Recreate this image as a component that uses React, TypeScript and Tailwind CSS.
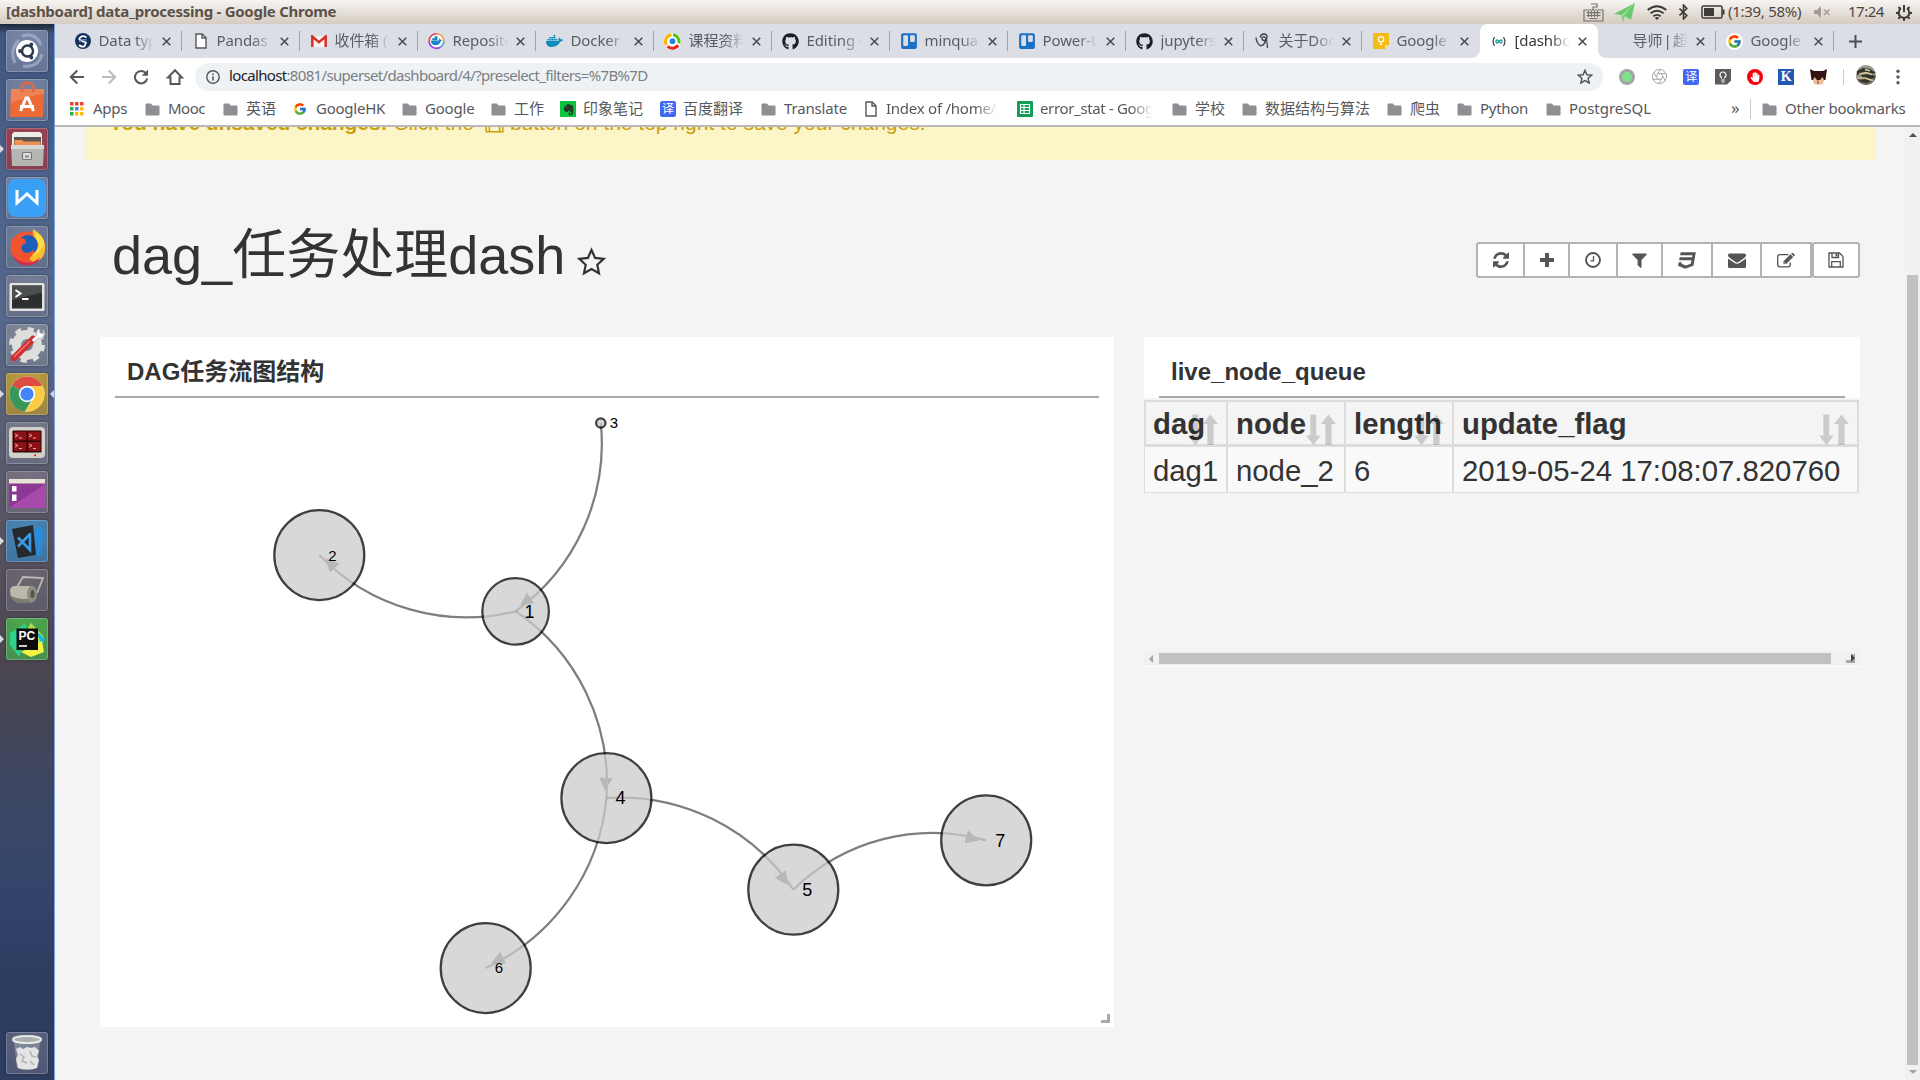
import React from 'react';
import { FcGoogle } from 'react-icons/fc';
import { FaGithub, FaTrello, FaDocker, FaEvernote, FaCss3, FaHandPaper } from 'react-icons/fa';
import { Aperture, Lightbulb } from 'lucide-react';

/* ---------- small shared drawings ---------- */

const PageIcon = () => (
  <svg width="12" height="16" viewBox="0 0 12 16" fill="#fff" stroke="#55585c" strokeWidth="1.4">
    <path d="M1 1h6.2L11 4.8V15H1z" />
    <path d="M7 1v4h4" fill="none" />
  </svg>
);

const Folder = () => (
  <svg width="15" height="13" viewBox="0 0 15 13" fill="#8e8e93">
    <path d="M1.5 0.5h4.3l1.8 2h5.9q1 0 1 1v8q0 1-1 1h-12q-1 0-1-1v-10q0-1 1-1z" />
  </svg>
);

const Cross = () => (
  <svg width="9" height="9" viewBox="0 0 9 9" stroke="#4b4e52" strokeWidth="1.6">
    <path d="M0.7 0.7l7.6 7.6M8.3 0.7L0.7 8.3" />
  </svg>
);

const TrelloMark = () => (
  <span className="flex h-4 w-4 items-center justify-center text-[#1b6fc4]">
    <FaTrello size={18} />
  </span>
);

const Keep = () => (
  <svg width="16" height="16" viewBox="0 0 16 16">
    <path d="M0 1q0-1 1-1h14q1 0 1 1v11l-4 4H1q-1 0-1-1z" fill="#f5ba15" />
    <path d="M16 12l-4 4v-4z" fill="#fbe08d" />
    <circle cx="8" cy="6.3" r="2.7" fill="none" stroke="#fff" strokeWidth="1.2" />
    <path d="M6.7 10h2.6M7 11.6h2" stroke="#fff" strokeWidth="1.1" />
  </svg>
);

const Gmail = () => (
  <svg width="16" height="12" viewBox="0 0 16 12">
    <path d="M0 1h16v11H0z" fill="#f3f3f3" />
    <path d="M1.3 12V1.5L8 7.2l6.7-5.7V12" fill="none" stroke="#d93025" strokeWidth="2.5" />
  </svg>
);

const Repo = () => (
  <svg width="18" height="18" viewBox="0 0 18 18">
    <circle cx="9" cy="9" r="7.8" fill="#fff" stroke="#f2994a" strokeWidth="1.6" />
    <path d="M9 1.2a7.8 7.8 0 0 0-7.8 7.8" fill="none" stroke="#e0457b" strokeWidth="1.6" />
    <path d="M1.2 9a7.8 7.8 0 0 0 12 6.500" fill="none" stroke="#8a3ffc" strokeWidth="1.6" />
    <path d="M13.200 15.500A7.800 7.800 0 0 0 16.800 9" fill="none" stroke="#2bb4e8" strokeWidth="1.6" />
    <path d="M3 8.500h8.500l.4-2.500 1.200 1.500 2.200.5-1.900 1.500Q12 13.500 8 13.500q-4.500 0-5-5z" fill="#1488c6" />
    <path d="M4.500 6h5.500v2.200H4.500zM7 4h3v2H7z" fill="#1488c6" />
  </svg>
);

const Course = () => (
  <svg width="17" height="17" viewBox="0 0 17 17" fill="none" strokeWidth="3">
    <circle cx="8.500" cy="8.500" r="7" fill="#fff" stroke="#fff" />
    <path d="M7.500 1.800A6.800 6.800 0 0 0 2.500 12" stroke="#f7b500" />
    <path d="M9 1.800a6.800 6.800 0 0 1 5.800 8.500" stroke="#4fc414" />
    <path d="M3.500 13.200a6.800 6.800 0 0 0 10.500-1" stroke="#e8251c" />
    <circle cx="8.500" cy="8.200" r="2.900" fill="#2185d8" />
  </svg>
);

const Scipy = () => (
  <svg width="16" height="16" viewBox="0 0 16 16">
    <circle cx="8" cy="8" r="8" fill="#16335f" />
    <path d="M11.500 4.500Q8.500 2 5.500 4.200T7 8t4 2-1.500 3.200Q7 14.500 4 12" fill="none" stroke="#fff" strokeWidth="1.7" />
    <path d="M4 8.500q3-3 8-1.500" fill="none" stroke="#7fa3d8" strokeWidth="1" />
  </svg>
);

const Infinity2 = () => (
  <svg width="14" height="9" viewBox="0 0 14 9" fill="none" stroke="#484848" strokeWidth="1.300">
    <path d="M3 .7Q1.500.7 1.500 2.500T.5 4.500q1 0 1 2T3 8.300M11 .7q1.500 0 1.500 1.800t1 2q-1 0-1 2T11 8.300" />
    <path d="M7 4.500Q5.800 3 4.900 3T4 4.500 4.900 6 7 4.500 9.100 3 10 4.500 9.100 6 7 4.500z" stroke="#1f9d9f" />
  </svg>
);

const Scribble = () => (
  <svg width="15" height="16" viewBox="0 0 15 16" fill="none" stroke="#3f3f3f" strokeWidth="1.300">
    <path d="M1 4.500q0 3 2 6t4 2q3-1.500 4-6" />
    <path d="M5 4.500Q6 1 9 1t3 3-2.500 3.500Q7 7.500 7 5.500T9.500 4Q12 5 12.500 15" />
  </svg>
);

const Sheet = () => (
  <svg width="16" height="16" viewBox="0 0 16 16">
    <rect width="16" height="16" rx="1" fill="#0f9d58" />
    <path d="M3.500 3.500h9v9h-9zM3.500 6.500h9M3.500 9.500h9M7 3.500v9" fill="none" stroke="#fff" strokeWidth="1.200" />
  </svg>
);

const AppsGrid = () => (
  <svg width="14" height="14" viewBox="0 0 14 14">
    {['#ea4335', '#ea4335', '#ea4335', '#34a853', '#4285f4', '#fbbc05', '#34a853', '#fbbc05', '#fbbc05'].map((c, i) => (
      <rect key={i} x={(i % 3) * 5} y={Math.floor(i / 3) * 5} width="3.500" height="3.500" fill={c} />
    ))}
  </svg>
);

const Yi = () => (
  <span className="flex h-4 w-4 items-center justify-center rounded-[2px] bg-[#4169f0] text-[12px] leading-none text-white">译</span>
);

/* ---------- desktop top bar ---------- */

function TopBar() {
  return (
    <header className="flex h-6 shrink-0 items-center bg-gradient-to-b from-[#f7f5f2] to-[#d5cbc1] pl-[6px] text-[15px] text-[#4d4841]">
      <span className="mb-[2px] font-bold tracking-[-0.27px] text-[#5b524a]">[dashboard] data_processing - Google Chrome</span>
      <div className="ml-auto flex h-full items-center">
        <svg className="mr-[10px]" width="21" height="19" viewBox="0 0 21 19" fill="none" stroke="#77736e" strokeWidth="1.200">
          <path d="M1 7h19v11H1zM10 7V4h4V1H8M3.500 9.700h14M3.500 12.500h14M6.500 15.500h8M5.500 8v6M8.500 8v6M11.500 8v6M14.500 8v6" />
        </svg>
        <svg className="mr-[11px]" width="22" height="19" viewBox="0 0 22 19">
          <path d="M0 11L21 0l-4 17-6-4-2 6-2-7z" fill="#6cc86d" />
          <path d="M7 12L21 0 9.500 13.500 9 19z" fill="#8edc90" />
        </svg>
        <svg className="mr-[12px]" width="20" height="15" viewBox="0 0 20 15" fill="none" stroke="#3c3b37" strokeWidth="1.900">
          <path d="M0.700 5Q10-2.500 19.300 5M3.500 8.200q6.500-5 13 0M6.300 11.200q3.700-2.700 7.400 0" />
          <path d="M7.800 12.700q2.200-1.300 4.400 0L10 15z" fill="#3c3b37" stroke="none" />
        </svg>
        <svg className="mr-[13px]" width="9" height="16" viewBox="0 0 9 16" fill="none" stroke="#3c3b37" strokeWidth="1.600">
          <path d="M0.500 4.500l7.300 7L4.500 15V1l3.300 3.500-7.300 7" />
        </svg>
        <svg className="mr-[3px]" width="24" height="14" viewBox="0 0 24 14">
          <rect x="1" y="1" width="20" height="12" rx="1.500" fill="none" stroke="#3c3b37" strokeWidth="1.500" />
          <path d="M3 3h10v8H3zM21.500 4.500H23.500v5h-2z" fill="#3c3b37" />
        </svg>
        <span className="mb-[2px] w-[86px] whitespace-nowrap tracking-[-0.28px]">(1:39, 58%)</span>
        <svg className="mr-[17px]" width="17" height="12" viewBox="0 0 17 12">
          <path d="M0 4h3l4-4v12L3 8H0z" fill="#a29c95" />
          <path d="M10 3.500l5.500 5.500M15.500 3.500L10 9" stroke="#a29c95" strokeWidth="1.500" />
        </svg>
        <span className="mb-[2px] w-[48px] tracking-[-0.5px]">17:24</span>
        <svg className="mr-2" width="16" height="17" viewBox="0 0 16 17" fill="none" stroke="#3c3b37">
          <path d="M5 4.300a5.300 5.300 0 1 0 6 0" strokeWidth="2" />
          <path d="M8 1v7" strokeWidth="2" />
          <path d="M2.500 3l1.700 1.700M13.500 3l-1.700 1.700M0 9h2.700M13.300 9H16M2.300 14.700L4 13M13.700 14.700L12 13M8 14v3" strokeWidth="2" />
        </svg>
      </div>
    </header>
  );
}

/* ---------- launcher ---------- */

const launcher: { tile: string; running?: boolean; focused?: boolean; art: React.ReactNode }[] = [
  {
    tile: 'bg-[#7684a5]',
    art: (
      <>
        <path d="M9 33Q3 20 13 10M16 6Q30 2 35 15M36 24Q33 38 17 36" fill="none" stroke="#b4bdd0" strokeWidth="3" opacity=".6" />
        <circle cx="21" cy="21" r="11" fill="#fff" />
        <circle cx="21.500" cy="21" r="5.500" fill="none" stroke="#2e3a52" strokeWidth="2.500" />
        <circle cx="14" cy="21" r="1.900" fill="#2e3a52" />
        <circle cx="25.300" cy="14.500" r="1.900" fill="#2e3a52" />
        <circle cx="25.300" cy="27.500" r="1.900" fill="#2e3a52" />
      </>
    ),
  },
  {
    tile: 'bg-[#7181a1]',
    art: (
      <>
        <path d="M5 10h33l-1 28H4z" fill="#ec6a35" />
        <path d="M5 10h33v5Q20 17 4.800 24z" fill="#f0966a" opacity=".6" />
        <path d="M16 13V7q0-3 5-3t6 3v6" fill="none" stroke="#d96a4e" strokeWidth="2.800" />
        <path d="M14.500 32l5.500-13h2l5.500 13M14 27.500h14" fill="none" stroke="#fff" strokeWidth="3" />
      </>
    ),
  },
  {
    tile: 'bg-[#9c4353]',
    running: true,
    art: (
      <>
        <path d="M6 6l2-2h26l2 2v12H6z" fill="#ececea" />
        <path d="M8 9h27v8H8z" fill="#5a5550" />
        <path d="M8.500 12h8l1 1.500h17V18h-26z" fill="#ec9150" />
        <path d="M5 17h33l-1 21H6z" fill="#b5b5b3" />
        <path d="M5 17h33v4H5z" fill="#d7d7d5" />
        <rect x="16.500" y="24.500" width="9" height="7" rx="1" fill="#ddd" stroke="#777" strokeWidth="1.200" />
        <path d="M19 27.500h4v2h-4z" fill="#888" />
      </>
    ),
  },
  {
    tile: 'bg-[#7383a2]',
    art: (
      <>
        <rect x="2" y="2" width="38" height="38" rx="8" fill="#3aa0f6" />
        <path d="M11 13v13l10-9 10 9V13" fill="none" stroke="#fff" strokeWidth="3" />
      </>
    ),
  },
  {
    tile: 'bg-[#6f7d9a]',
    art: (
      <>
        <circle cx="21" cy="22" r="16.500" fill="#ef5532" />
        <path d="M27 3q-1 7 3 10-2 12-9 16 3 6 8 8 13-6 9.500-21Q36 8 27 3z" fill="#fbbd2c" />
        <circle cx="22" cy="19" r="10" fill="#1d5fb8" />
        <path d="M14 12q5 0 6 3 0 3-4 4-2 6 4 8 6 0 8-5 0 11-10 12Q5 32 6 12q3 3 8 0z" fill="#f3522f" />
        <path d="M29 6q-1 6 4 11-1 8-7 13 11-4 12-14Q36 9 29 6z" fill="#fedc45" />
        <path d="M6 27q4 9 16 10 8-1 12-6-2 8-13 8.500Q9 39 6 27z" fill="#d32a4d" />
      </>
    ),
  },
  {
    tile: 'bg-[#747d93]',
    art: (
      <>
        <rect x="3.500" y="8" width="35" height="28" rx="1.500" fill="#e2e2df" />
        <rect x="6" y="10.500" width="30" height="23" fill="#2c2e2f" />
        <path d="M6 10.500h30v7L6 25z" fill="#4b4f50" />
        <path d="M9.500 15l5 3.500-5 3.500M16 24h6.500" fill="none" stroke="#fff" strokeWidth="2" />
      </>
    ),
  },
  {
    tile: 'bg-[#7e8798]',
    art: (
      <>
        <circle cx="21" cy="21" r="10.500" fill="none" stroke="#dededc" strokeWidth="9" />
        <circle cx="21" cy="21" r="16" fill="none" stroke="#dededc" strokeWidth="4" strokeDasharray="6.200 6.370" />
        <path d="M8 34L27 15" stroke="#cf2f2f" strokeWidth="6.500" strokeLinecap="round" />
        <path d="M8 33L24 17" stroke="#ef7b74" strokeWidth="1.500" />
        <path d="M26 16l5-5q-1-4 2-6l1 4 4 1-1-4q3 4 0 7-3 2-5 1l-4 4z" fill="#fff" stroke="#c9c9c9" />
      </>
    ),
  },
  {
    tile: 'bg-[#b9993f]',
    running: true,
    focused: true,
    art: (
      <>
        <circle cx="21" cy="21" r="17.500" fill="#fff" />
        <path d="M21 21L5.800 12.300A17.500 17.500 0 0 1 36.200 12.300z" fill="#dc4c40" />
        <path d="M21 21l-15.200-8.700A17.500 17.500 0 0 0 19 38.400l7-12z" fill="#38985a" />
        <path d="M21 13h15.500A17.500 17.500 0 0 1 19 38.400L28 25z" fill="#fccb46" />
        <circle cx="21" cy="21" r="8.200" fill="#fff" />
        <circle cx="21" cy="21" r="6.600" fill="#4285f4" />
      </>
    ),
  },
  {
    tile: 'bg-[#77798a]',
    art: (
      <>
        <rect x="3" y="5" width="36" height="31" rx="4" fill="#d1d1ca" />
        <rect x="6.500" y="8.500" width="29" height="22" rx="1" fill="#2d0405" />
        <path d="M8 9.500h12.500v9H8zM22 9.500h12.500v9H22zM8 20h12.500v9H8zM22 20h12.500v9H22z" fill="#8b1116" />
        <path d="M9 12l3 1.500L9 15M23 12l3 1.500-3 1.500M9 22l3 1.500L9 25M23 22l3 1.500-3 1.500M13 16h3M27 16h3M13 26.500h3M27 26.500h3" fill="none" stroke="#eaa" strokeWidth="1" />
        <circle cx="29" cy="33.300" r="1.100" fill="#e22" />
      </>
    ),
  },
  {
    tile: 'bg-[#777080]',
    art: (
      <>
        <rect x="3" y="8" width="36" height="29" rx="1" fill="#8d3795" />
        <path d="M3 37l36-24v24z" fill="#b353b7" opacity=".7" />
        <rect x="3" y="8" width="36" height="4.500" fill="#e7e3d6" />
        <path d="M6 15h4.500v5.500H6zM6 23.500h4.500V30H6z" fill="#fff" />
      </>
    ),
  },
  {
    tile: 'bg-[#4883b2]',
    running: true,
    art: (
      <>
        <path d="M29 6l9 4-3 25-22 3 14-6z" fill="#2b8bd8" />
        <path d="M6 9l21-4 3 30-18 3z" fill="#26282b" />
        <path d="M24 13v17l-12-12.500M24 14L12 26.500M24 13v17" fill="none" stroke="#3a9be4" strokeWidth="2.600" />
      </>
    ),
  },
  {
    tile: 'bg-[#69646e]',
    art: (
      <>
        <path d="M11 18l6-10 20 1-6 15" fill="none" stroke="#b9b9b3" strokeWidth="1.800" />
        <path d="M4 22q0-5 5-5h17v17H14Q4 32 4 22z" fill="#b9b8aa" />
        <path d="M5 27q10 5 21 2v5H14Q7 33 5 27z" fill="#7c7b70" />
        <ellipse cx="26" cy="25" rx="5" ry="8.500" fill="#8e8d83" />
        <ellipse cx="26.500" cy="25" rx="2" ry="4" fill="#55544e" />
      </>
    ),
  },
  {
    tile: 'bg-[#4da54d]',
    running: true,
    art: (
      <>
        <path d="M4 15l15-9 4 9-10 24-9-12z" fill="#2fd08c" />
        <path d="M25 5l13 14-5 10-14-14z" fill="#a8e54b" />
        <path d="M30 13l9 8-3 6z" fill="#17b6e8" />
        <path d="M15 34l21-11 2 11-13 5z" fill="#f6f142" />
        <rect x="10.500" y="10.500" width="21.500" height="21.500" fill="#0c0c0c" />
        <path d="M13 28h8" stroke="#fff" strokeWidth="1.600" />
        <text x="12.500" y="22" fontFamily="Liberation Sans" fontWeight="bold" fontSize="12" fill="#fff">PC</text>
      </>
    ),
  },
];

function Tile({ tile, running, focused, art }: { tile: string; running?: boolean; focused?: boolean; art: React.ReactNode }) {
  return (
    <div className="flex h-[42px] w-[55px] shrink-0 items-center">
      <span className="flex w-[6px] items-center">
        {running && <span className="h-0 w-0 border-y-[4px] border-l-[4px] border-y-transparent border-l-[#d9dadf]" />}
      </span>
      <span className={`h-[42px] w-[42px] rounded-[3px] shadow-[inset_0_0_0_1px_rgba(255,255,255,0.22),inset_0_-14px_16px_rgba(40,50,90,0.18),0_0_3px_rgba(0,0,0,0.35)] ${tile}`}>
        <svg width="42" height="42" viewBox="0 0 42 42">{art}</svg>
      </span>
      <span className="flex w-[7px] justify-end pr-px">
        {focused && <span className="h-0 w-0 border-y-[4px] border-r-[4px] border-y-transparent border-r-[#d9dadf]" />}
      </span>
    </div>
  );
}

function Launcher() {
  return (
    <aside className="flex w-[55px] shrink-0 flex-col gap-[7px] border-r border-[#7ea3dc] bg-[linear-gradient(180deg,#1d2838_0px,#42577f_10px,#4c638c_160px,#56678a_300px,#5a5f74_400px,#57525f_520px,#4a4550_640px,#454555_690px,#3d4762_760px,#34456b_860px,#2c3d62_960px,#2e3c60_1056px)] pb-[6px] pt-[6px]">
      {launcher.map((t, i) => (
        <Tile key={i} {...t} />
      ))}
      <div className="mt-auto">
        <Tile
          tile="bg-[#58617d]"
          art={
            <>
              <path d="M8 10l3 26q10 4 20 0l3-26z" fill="#7e8798" />
              <path d="M10 17l4-2 3 2 4-2 4 1 4-1 4 4-2 5 2 4-2 8q-10 3-19 0l-2-9 2-4z" fill="#e3e4e3" />
              <path d="M14 22l4 3-2 4 5 2M24 19l2 5 4 1M24 29l4 4" stroke="#b0b3b3" fill="none" strokeWidth="1.500" />
              <ellipse cx="21" cy="7.500" rx="14" ry="3.500" fill="#a9aeae" stroke="#e6e8e4" strokeWidth="2" />
            </>
          }
        />
      </div>
    </aside>
  );
}

/* ---------- browser chrome ---------- */

const tabs: { icon: React.ReactNode; title: string; active?: boolean }[] = [
  { icon: <Scipy />, title: 'Data types' },
  { icon: <PageIcon />, title: 'Pandas -' },
  { icon: <Gmail />, title: '收件箱 (8' },
  { icon: <Repo />, title: 'Repositories' },
  { icon: <FaDocker size={18} color="#0d8dbb" />, title: 'Docker Hub' },
  { icon: <Course />, title: '课程资料' },
  { icon: <FaGithub size={17} color="#1b1f23" />, title: 'Editing d' },
  { icon: <TrelloMark />, title: 'minquan' },
  { icon: <TrelloMark />, title: 'Power-Up' },
  { icon: <FaGithub size={17} color="#1b1f23" />, title: 'jupyterst' },
  { icon: <Scribble />, title: '关于Dock' },
  { icon: <Keep />, title: 'Google K' },
  { icon: <Infinity2 />, title: '[dashboard]', active: true },
  { icon: null, title: '导师 | 超星' },
  { icon: <span className="rounded-full bg-white p-px"><FcGoogle size={15} /></span>, title: 'Google' },
];

function TabStrip() {
  return (
    <div className="flex h-[34px] items-stretch bg-[#dcdee6] pl-[9px]">
      {tabs.map((t, i) => (
        <div key={i} className={`relative flex w-[118px] shrink-0 items-center ${t.active ? 'rounded-t-[8px] bg-white' : ''}`}>
          {t.active && (
            <>
              <span className="absolute bottom-0 left-[-8px] h-2 w-2 bg-[radial-gradient(circle_at_0_0,transparent_7.5px,#fff_8px)]" />
              <span className="absolute bottom-0 right-[-8px] h-2 w-2 bg-[radial-gradient(circle_at_100%_0,transparent_7.5px,#fff_8px)]" />
            </>
          )}
          <span className="ml-[10px] flex w-[17px] items-center justify-center">{t.icon}</span>
          <span
            className={`mb-[2px] ml-[7.500px] w-[55px] overflow-hidden whitespace-nowrap text-[15px] [mask-image:linear-gradient(90deg,#000_65%,transparent)] ${
              i === 13 ? 'tracking-[-0.1px] [word-spacing:-2.5px]' : 'tracking-[-0.1px]'
            } ${t.active ? 'text-[#35383c]' : 'text-[#5a5d62]'}`}
          >
            {t.title}
          </span>
          <span className="ml-[8px]">
            <Cross />
          </span>
          {!t.active && i !== 11 && <span className="ml-auto h-5 w-px bg-[#9fa2a9]" />}
        </div>
      ))}
      <svg className="ml-[15px] self-center" width="13" height="13" viewBox="0 0 13 13" stroke="#4b4e52" strokeWidth="2">
        <path d="M6.500 0v13M0 6.500h13" />
      </svg>
    </div>
  );
}

function AddressBar() {
  return (
    <div className="flex h-[37px] items-center bg-white pl-[14px]">
      <svg width="118" height="20" viewBox="0 0 118 20" fill="none" stroke="#55585d" strokeWidth="2">
        <path d="M15 10H2M8.300 3.500L1.800 10l6.500 6.500" />
        <path d="M33 10h13M39.700 3.500l6.500 6.500-6.500 6.500" stroke="#b9bbbe" />
        <path d="M77 6.300A6.200 6.200 0 1 0 78.200 11.500" />
        <path d="M79 2.500V8.800H72.700z" fill="#55585d" stroke="none" />
        <path d="M99 10.500h2.500V17h9v-6.500h2.500L106 3.300z" />
      </svg>
      <div className="ml-[8px] flex h-7 w-[1408px] items-center rounded-full bg-[#eef2f4] pl-[11px] pr-[10px]">
        <svg width="14" height="14" viewBox="0 0 14 14" fill="none" stroke="#55585d" strokeWidth="1.400">
          <circle cx="7" cy="7" r="6.200" />
          <path d="M7 6.200v4.300M7 3.500v1.500" strokeWidth="1.600" />
        </svg>
        <span className="mb-[2px] ml-[9px] whitespace-nowrap text-[15px] tracking-[-0.66px] text-[#7a7f85]">
          <span className="text-[#202124]">localhost</span>:8081/superset/dashboard/4/?preselect_filters=%7B%7D
        </span>
        <svg className="ml-auto" width="16" height="15" viewBox="0 0 16 15" fill="none" stroke="#55585d" strokeWidth="1.500">
          <path d="M8 1.300l1.900 4.400 4.800.4-3.600 3.200 1.100 4.700L8 11.500 3.800 14l1.100-4.700L1.300 6.100l4.800-.4z" />
        </svg>
      </div>
      <div className="ml-[16px] flex w-[208px] items-center justify-between">
        <svg width="16" height="16" viewBox="0 0 16 16">
          <circle cx="8" cy="8" r="8" fill="#a4a4a4" />
          <circle cx="8" cy="8" r="5" fill="#7ee08b" />
        </svg>
        <Aperture size={17} color="#a5a5a5" strokeWidth={1.400} />
        <Yi />
        <span className="flex h-4 w-4 items-center justify-center bg-[#5c5c5c] [clip-path:polygon(0_0,100%_0,100%_75%,75%_100%,0_100%)]">
          <Lightbulb size={12} color="#fff" strokeWidth={2.400} />
        </span>
        <span className="flex h-4 w-4 items-center justify-center rounded-full bg-[#f4000e]">
          <FaHandPaper size={10} color="#fff" />
        </span>
        <span className="flex h-4 w-4 items-center justify-center bg-[#2459b3] font-['Liberation_Serif'] text-[14px] font-bold leading-none text-white">K</span>
        <svg width="17" height="16" viewBox="0 0 17 16">
          <path d="M0 0l4 2h9l4-2-1.500 11H1.500z" fill="#33140f" />
          <path d="M3 11l1.500-3L7 11q1.500 1 3 0l2.500-3 1.500 3-1 4q-4 1.500-9 0z" fill="#ecbc9a" />
          <path d="M8 11v4" stroke="#7a4a38" />
        </svg>
      </div>
      <span className="ml-4 h-4 w-px bg-[#c9cbce]" />
      <svg className="ml-[12px] mb-[4px]" width="20" height="20" viewBox="0 0 20 20">
        <defs>
          <clipPath id="avatar">
            <circle cx="10" cy="10" r="10" />
          </clipPath>
        </defs>
        <g clipPath="url(#avatar)">
          <path d="M0 0h20v20H0z" fill="#96998b" />
          <path d="M0 12h20v8H0z" fill="#6d675a" />
          <path d="M1 6l6-3 7 1 6 4-5 1-4-2-4 2-6 1zM5 10l7-1 8 2-4 3-9-1zM2 16l7-2 5 2-3 2z" fill="#33322e" />
          <path d="M3 9l7-1.500 6 2M1 13l8 0 8 2.500M9 4.500l5 1.200" stroke="#d9c995" strokeWidth="1.500" fill="none" />
        </g>
      </svg>
      <svg className="ml-[20px]" width="4" height="16" viewBox="0 0 4 16" fill="#55585d">
        <circle cx="2" cy="2.200" r="1.700" />
        <circle cx="2" cy="8" r="1.700" />
        <circle cx="2" cy="13.800" r="1.700" />
      </svg>
    </div>
  );
}

const bookmarks: { w: string; icon: React.ReactNode; label: string; text?: string }[] = [
  { w: 'w-[75px]', icon: <AppsGrid />, label: 'Apps', text: 'tracking-[-0.3px]' },
  { w: 'w-[78px]', icon: <Folder />, label: 'Mooc', text: 'tracking-[-0.5px]' },
  { w: 'w-[70px]', icon: <Folder />, label: '英语' },
  { w: 'w-[109px]', icon: <FcGoogle size={14} />, label: 'GoogleHK', text: 'tracking-[-0.25px]' },
  { w: 'w-[89px]', icon: <Folder />, label: 'Google', text: 'tracking-[-0.2px]' },
  {
    w: 'w-[69px]',
    icon: <Folder />,
    label: '工作',
  },
  {
    w: 'w-[100px]',
    icon: (
      <span className="flex h-4 w-4 items-center justify-center bg-[#0cc33d]">
        <FaEvernote size={13} color="#26382b" />
      </span>
    ),
    label: '印象笔记',
  },
  { w: 'w-[101px]', icon: <Yi />, label: '百度翻译' },
  { w: 'w-[104px]', icon: <Folder />, label: 'Translate', text: 'tracking-[-0.15px]' },
  { w: 'w-[152px]', icon: <PageIcon />, label: 'Index of /home/xm', text: 'ml-[-2px] w-[112px] overflow-hidden tracking-[-0.25px] [mask-image:linear-gradient(90deg,#000_80%,transparent)]' },
  { w: 'w-[155px]', icon: <Sheet />, label: 'error_stat - Google', text: 'w-[113px] overflow-hidden tracking-[-0.35px] [mask-image:linear-gradient(90deg,#000_80%,transparent)]' },
  { w: 'w-[70px]', icon: <Folder />, label: '学校' },
  { w: 'w-[145px]', icon: <Folder />, label: '数据结构与算法' },
  { w: 'w-[70px]', icon: <Folder />, label: '爬虫' },
  { w: 'w-[89px]', icon: <Folder />, label: 'Python', text: 'tracking-[-0.3px]' },
  { w: 'w-[185px]', icon: <Folder />, label: 'PostgreSQL', text: '' },
];

function BookmarksBar() {
  return (
    <div className="flex h-[32px] items-center border-b-2 border-[#b9b9bd] bg-white pb-[2px] pl-[15px] text-[15px] text-[#55585d]">
      {bookmarks.map((b) => (
        <span key={b.label} className={`flex shrink-0 items-center whitespace-nowrap ${b.w}`}>
          <span className="flex w-[23px] shrink-0 items-center">{b.icon}</span>
          <span className={`mb-[2px] ${b.text ?? ''}`}>{b.label}</span>
        </span>
      ))}
      <span className="mb-[3px] w-[19px] text-[17px] leading-none">»</span>
      <span className="mr-[11px] h-5 w-px bg-[#c9cbce]" />
      <span className="flex items-center whitespace-nowrap">
        <span className="w-[23px]">
          <Folder />
        </span>
        <span className="mb-[2px] tracking-[-0.25px]">Other bookmarks</span>
      </span>
    </div>
  );
}

/* ---------- dashboard ---------- */

const nodes = [
  { id: '1', x: 515.6, y: 611.3, r: 33.3, size: 18, base: 617.700 },
  { id: '2', x: 319.3, y: 555, r: 45, size: 15, base: 561 },
  { id: '3', x: 600.8, y: 423, r: 4.7, size: 15, base: 428.3 },
  { id: '4', x: 606.4, y: 798, r: 45, size: 18, base: 804 },
  { id: '5', x: 793.3, y: 889.7, r: 45, size: 18, base: 896 },
  { id: '6', x: 485.700, y: 968, r: 45, size: 15, base: 973.300 },
  { id: '7', x: 986.200, y: 840.300, r: 45, size: 18, base: 846.700 },
];

const links = [
  ['3', '1'],
  ['1', '2'],
  ['1', '4'],
  ['4', '5'],
  ['4', '6'],
  ['5', '7'],
];

function Dag() {
  const find = (id: string) => nodes.find((n) => n.id === id)!;
  return (
    <svg className="block" width="1014" height="628" viewBox="100 398 1014 628" fontFamily="Liberation Sans">
      <defs>
        <marker id="end" viewBox="0 -5 10 10" refX="15" refY="-1.500" markerWidth="6" markerHeight="6" orient="auto">
          <path d="M0,-5L10,0L0,5" />
        </marker>
      </defs>
      {links.map(([a, b]) => {
        const s = find(a);
        const t = find(b);
        const d = Math.hypot(t.x - s.x, t.y - s.y);
        return (
          <path
            key={a + b}
            d={`M${s.x},${s.y}A${d},${d} 0 0,1 ${t.x},${t.y}`}
            fill="none"
            stroke="#000"
            strokeWidth="2.250"
            opacity="0.500"
            markerEnd="url(#end)"
          />
        );
      })}
      {nodes.map((n) => (
        <g key={n.id}>
          <circle cx={n.x} cy={n.y} r={n.r} fill="#ccc" stroke="#000" strokeWidth="2.250" opacity="0.750" />
          <text x={n.x + 9} y={n.base} fontSize={n.size}>
            {n.id}
          </text>
        </g>
      ))}
    </svg>
  );
}

const Grip = () => (
  <svg width="9" height="9" viewBox="0 0 9 9">
    <path d="M7.500 0v7.500H0" fill="none" stroke="#aaa" strokeWidth="3" />
  </svg>
);

const SaveGlyph = ({ size, color }: { size: number; color: string }) => (
  <svg width={size} height={size} viewBox="0 0 16 16" fill="none" stroke={color} strokeWidth="1.300">
    <path d="M1 1h10.500L15 4.500V15H1z" />
    <path d="M4 1v4.500h6.500V1M3.700 15V9.700h8.600V15" />
    <path d="M7.500 1.500h2v3h-2z" fill={color} stroke="none" />
  </svg>
);

const actions: { w: string; glyph: React.ReactNode }[] = [
  {
    w: 'w-[49px]',
    glyph: (
      <svg width="16" height="16" viewBox="0 0 1536 1536" fill="#555">
        <path d="M1511 928q0 5-1 7-64 268-268 434.500T764 1536q-146 0-282.500-55T238 1324l-129 129q-19 19-45 19t-45-19-19-45V960q0-26 19-45t45-19h448q26 0 45 19t19 45-19 45l-137 137q71 66 161 102t187 36q134 0 250-65t186-179q11-17 53-117 8-23 30-23h192q13 0 22.500 9.500t9.500 22.500zm25-800v448q0 26-19 45t-45 19h-448q-26 0-45-19t-19-45 19-45l138-138Q969 256 768 256q-134 0-250 65T332 500q-11 17-53 117-8 23-30 23H50q-13 0-22.500-9.500T18 608v-7q65-268 270-434.500T768 0q146 0 284 55.500T1297 212l130-129q19-19 45-19t45 19 19 45z" />
      </svg>
    ),
  },
  {
    w: 'w-[45px]',
    glyph: (
      <svg width="14" height="14" viewBox="0 0 14 14">
        <path d="M7 0v14M0 7h14" stroke="#555" strokeWidth="4" />
      </svg>
    ),
  },
  {
    w: 'w-[48px]',
    glyph: (
      <svg width="16" height="16" viewBox="0 0 16 16" fill="none" stroke="#555">
        <circle cx="8" cy="8" r="7" strokeWidth="1.900" />
        <path d="M8.500 4v4.800H5.500" strokeWidth="1.300" />
      </svg>
    ),
  },
  {
    w: 'w-[45px]',
    glyph: (
      <svg width="15" height="15" viewBox="0 0 15 15" fill="#555">
        <path d="M.8.5h13.400q.8.4.3 1.200L9.500 7v7.300q-.3.900-1 .4L5.600 12V7L.5 1.700Q0 .900.800.5z" />
      </svg>
    ),
  },
  { w: 'w-[50px]', glyph: <FaCss3 size={19} color="#555" /> },
  {
    w: 'w-[49px]',
    glyph: (
      <svg width="18" height="15" viewBox="0 0 18 15" fill="#555">
        <path d="M1.500.5h15Q18 .5 18 2.300 18 3.600 16.500 4.700L10.500 9Q9 10 7.500 9l-6-4.300Q0 3.600 0 2.200 0 .500 1.500.5z" />
        <path d="M0 5.500l6.500 4.600q2.500 1.500 5 0L18 5.500v8q0 1.500-1.500 1.500h-15Q0 15 0 13.500z" />
      </svg>
    ),
  },
  {
    w: 'w-[50px]',
    glyph: (
      <svg width="18" height="15" viewBox="0 0 18 15" fill="none" stroke="#555" strokeWidth="1.300">
        <path d="M11.500 1.700H3Q.7 1.700.7 4v7.500q0 2.300 2.300 2.300h8q2.300 0 2.300-2.300V9.500" />
        <path d="M6.500 11V8.300L13.500 1.300l2.700 2.700L9.200 11z" fill="#555" stroke="none" />
        <path d="M14.200.7L15 0q.5-.3 1 .1l1.700 1.700q.3.500 0 1l-.8.700z" fill="#555" stroke="none" />
        <path d="M7 9.200l1.400 1.500" stroke="#fff" strokeWidth=".8" />
      </svg>
    ),
  },
];

function Actions() {
  return (
    <div className="flex h-[36px]">
      {actions.map((a, i) => (
        <span
          key={i}
          className={`flex items-center justify-center border-y-2 border-r-2 border-[#b3b3b3] bg-white ${a.w} ${i === 0 ? 'rounded-l-[3px] border-l-2' : ''}`}
        >
          {a.glyph}
        </span>
      ))}
      <span className="flex w-[48px] items-center justify-center rounded-[3px] border-2 border-[#b3b3b3] bg-white">
        <SaveGlyph size={16} color="#555" />
      </span>
    </div>
  );
}

const SortArrows = () => (
  <svg className="absolute bottom-[-1px] right-[8px]" width="30" height="31" viewBox="0 0 30 31" fill="#000" opacity="0.160">
    <path d="M4.300 0.500h6v21h4.600L7.500 31 0 21.500h4.300zM19.300 31V10H15L22.400.5 30 10h-4.500v21z" />
  </svg>
);

const columns = [
  { name: 'dag', value: 'dag1', w: 'w-[83px]' },
  { name: 'node', value: 'node_2', w: 'w-[118px]' },
  { name: 'length', value: '6', w: 'w-[108px]' },
  { name: 'update_flag', value: '2019-05-24 17:08:07.820760', w: 'w-[405px]' },
];

function QueueTable() {
  return (
    <div className="mt-[2px] w-[715px] text-[29.330px] leading-none text-[#333]">
      <div className="flex h-[47px] border-b-[3px] border-l-2 border-t-2 border-[#dcdcdc]">
        {columns.map((c, i) => (
          <div key={c.name} className={`relative flex items-start border-r-2 border-[#dcdcdc] pt-[7px] font-bold ${i === 0 ? 'w-[82px] pl-[7px]' : `pl-[8px] ${c.w}`}`}>
            {c.name}
            <SortArrows />
          </div>
        ))}
      </div>
      <div className="flex h-[46px] border-b border-l border-[#dcdcdc] bg-[#f9f9f9]">
        {columns.map((c, i) => (
          <div key={c.name} className={`flex items-start whitespace-nowrap border-r-2 border-[#dcdcdc] pt-[9px] ${i === 0 ? 'w-[83px] pl-[8px]' : `pl-[8px] ${c.w}`}`}>
            {c.value}
          </div>
        ))}
      </div>
    </div>
  );
}

function ChartHeader({ children }: { children: React.ReactNode }) {
  return (
    <div className="h-[61px] bg-white px-[15px]">
      <div className="flex h-[61px] items-center border-b-2 border-[#a9a9a9] pl-3 pt-[11px] text-[24px] font-bold leading-none text-[#333]">{children}</div>
    </div>
  );
}

function Dashboard() {
  return (
    <main className="flex h-[953px] overflow-hidden bg-[#f4f4f4] font-['Liberation_Sans','Noto_Sans_CJK_SC',sans-serif]">
      <div className="w-[1850px] pl-[30px]">
        <div className="h-[33px] w-[1791px] overflow-hidden rounded-b-[3px] bg-[#fcf5c7] pl-[24px] text-[21px] leading-[24px] text-[#c9a00c]">
          <div className="mt-[-16px] flex items-center whitespace-nowrap">
            <b className="mr-[6px] tracking-[-0.1px]">You have unsaved changes!</b>
            <span className="mr-[11px]">Click the</span>
            <SaveGlyph size={19} color="#c9a00c" />
            <span className="ml-[6px]">button on the top right to save your changes.</span>
          </div>
        </div>
        <div className="flex h-[177px] items-start pl-[27px]">
          <h1 className="mt-[65px] whitespace-nowrap text-[54px] leading-[60px] text-[#333]">dag_任务处理dash</h1>
          <svg className="ml-[12px] mt-[87px]" width="29" height="29" viewBox="0 0 29 29" fill="none" stroke="#333" strokeWidth="2.200">
            <path d="M14.500 3l3.600 7.900 8.600 1-6.400 5.900 1.700 8.500-7.500-4.300L7 26.300l1.700-8.500-6.400-5.900 8.600-1z" />
          </svg>
          <div className="ml-auto mr-[45px] mt-[82px]">
            <Actions />
          </div>
        </div>
        <div className="flex items-start pl-[15px]">
          <section className="relative h-[690px] w-[1014px] bg-white">
            <ChartHeader>DAG任务流图结构</ChartHeader>
            <Dag />
            <span className="absolute bottom-[4px] right-[4px] leading-none">
              <Grip />
            </span>
          </section>
          <section className="ml-[30px] flex h-[330px] w-[716px] flex-col">
            <ChartHeader>live_node_queue</ChartHeader>
            <QueueTable />
            <div className="relative mt-auto flex h-[16px] items-center border-b border-white bg-[#f1f1f1] pl-[5px]">
              <span className="h-0 w-0 border-y-[4px] border-r-[4px] border-y-transparent border-r-[#a3a3a3]" />
              <span className="ml-[6px] h-[11px] w-[672px] bg-[#c1c1c1]" />
              <span className="absolute right-[5px] top-[3px]">
                <Grip />
              </span>
              <span className="absolute right-[5px] top-[3px] h-0 w-0 border-y-[4px] border-l-[4px] border-y-transparent border-l-[#444]" />
            </div>
          </section>
        </div>
      </div>
      <div className="flex w-[15px] flex-col items-center bg-[#f1f1f1]">
        <span className="mt-[6px] h-0 w-0 border-x-[4px] border-b-[4px] border-x-transparent border-b-[#505050]" />
        <span className="mt-[138px] h-[790px] w-[11px] bg-[#c1c1c1]" />
        <span className="mt-[5px] h-0 w-0 border-x-[4px] border-t-[4px] border-x-transparent border-t-[#a3a3a3]" />
      </div>
    </main>
  );
}

export default function App() {
  return (
    <div className="flex h-[1080px] w-[1920px] flex-col overflow-hidden font-['Noto_Sans','Noto_Sans_CJK_SC',sans-serif]">
      <TopBar />
      <div className="flex min-h-0 flex-1">
        <Launcher />
        <div className="flex w-[1865px] flex-col">
          <TabStrip />
          <AddressBar />
          <BookmarksBar />
          <Dashboard />
        </div>
      </div>
    </div>
  );
}
